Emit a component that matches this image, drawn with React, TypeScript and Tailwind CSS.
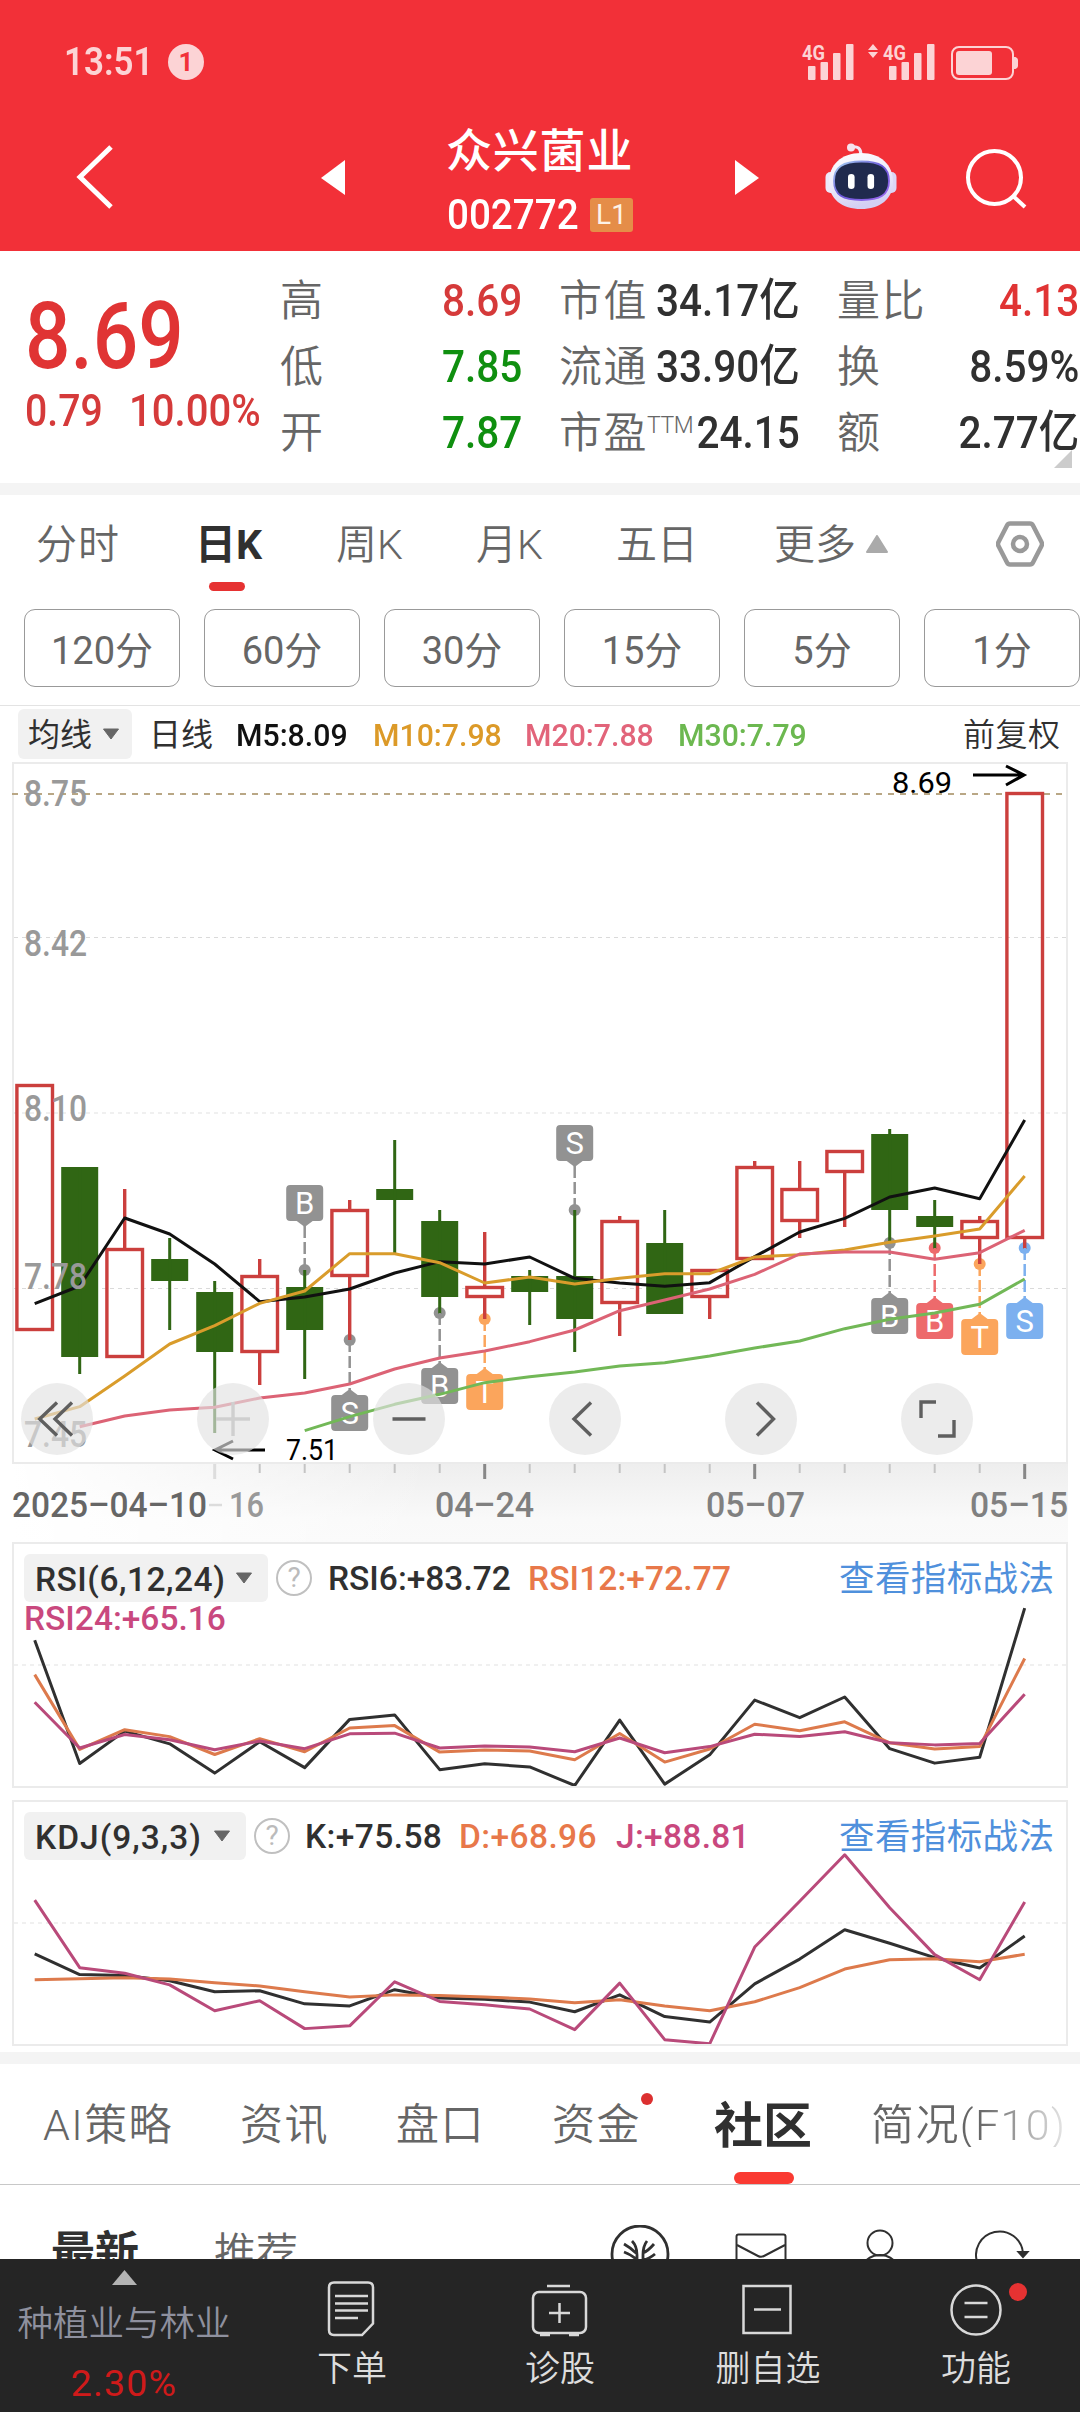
import React from 'react';

type Candle = [top: number, bottom: number, high: number, low: number, up: boolean];

const candles: Candle[] = [
  [1084, 1331, 1084, 1331, true],
  [1167, 1357, 1167, 1374, false],
  [1248, 1358, 1189, 1358, true],
  [1259, 1281, 1238, 1330, false],
  [1292, 1352, 1281, 1433, false],
  [1275, 1353, 1259, 1385, true],
  [1287, 1330, 1270, 1379, false],
  [1209, 1277, 1200, 1340, true],
  [1189, 1200, 1140, 1253, false],
  [1221, 1297, 1210, 1314, false],
  [1286, 1298, 1232, 1319, true],
  [1276, 1292, 1270, 1325, false],
  [1276, 1319, 1210, 1352, false],
  [1220, 1304, 1216, 1336, true],
  [1243, 1314, 1210, 1314, false],
  [1269, 1298, 1269, 1319, true],
  [1166, 1260, 1161, 1260, true],
  [1188, 1222, 1161, 1238, true],
  [1150, 1173, 1150, 1227, true],
  [1134, 1210, 1129, 1243, false],
  [1216, 1227, 1200, 1249, false],
  [1220, 1239, 1216, 1264, true],
  [792, 1239, 792, 1249, true],
];

const ma5 = [731, 678, 474, 522, 612, 725, 711, 687, 639, 605, 612, 591, 655, 669, 679, 668, 590, 516, 475, 411, 384, 416, 180];
const ma10 = [1077, 1040, 948, 852, 797, 730, 693, 581, 581, 608, 669, 651, 672, 655, 641, 641, 591, 584, 570, 547, 528, 507, 348];
const ma20 = [1100, 1068, 1050, 1042, 1014, 999, 972, 927, 894, 873, 845, 810, 752, 720, 687, 643, 582, 576, 576, 598, 578, 511];
const ma30 = [1112, 1070, 1033, 1003, 968, 950, 936, 918, 908, 888, 864, 843, 806, 778, 759, 733, 657];

const rsi6 = [320, 678, 584, 621, 706, 615, 690, 550, 537, 696, 679, 688, 742, 552, 738, 653, 494, 545, 485, 635, 677, 660, 227];
const rsi12 = [420, 637, 580, 600, 652, 606, 644, 575, 568, 645, 639, 642, 667, 591, 674, 636, 564, 583, 557, 618, 636, 629, 373];
const rsi24 = [500, 633, 594, 609, 638, 613, 635, 592, 590, 633, 627, 630, 644, 604, 647, 629, 593, 600, 586, 618, 624, 620, 477];

const kdjK = [1231, 1291, 1294, 1309, 1341, 1338, 1376, 1382, 1335, 1359, 1363, 1371, 1399, 1350, 1413, 1429, 1318, 1246, 1161, 1200, 1242, 1272, 1179];
const kdjD = [1306, 1303, 1300, 1304, 1315, 1324, 1341, 1356, 1350, 1352, 1356, 1362, 1373, 1364, 1382, 1396, 1370, 1329, 1275, 1248, 1245, 1254, 1232];
const kdjJ = [1075, 1271, 1287, 1321, 1396, 1367, 1448, 1440, 1312, 1369, 1379, 1391, 1451, 1316, 1480, 1492, 1211, 1078, 943, 1097, 1233, 1306, 1080];

const GRAY = '#929292';
const markers = [
  { i: 6, label: 'B', color: GRAY, dot: 1270, above: true },
  { i: 12, label: 'S', color: GRAY, dot: 1210, above: true },
  { i: 7, label: 'S', color: GRAY, dot: 1340 },
  { i: 9, label: 'B', color: GRAY, dot: 1313 },
  { i: 10, label: 'T', color: '#fba55c', dot: 1319 },
  { i: 19, label: 'B', color: GRAY, dot: 1243 },
  { i: 20, label: 'B', color: '#ed6a6c', dot: 1248 },
  { i: 21, label: 'T', color: '#fba55c', dot: 1264 },
  { i: 22, label: 'S', color: '#7cb0ef', dot: 1248 },
];

const xAt = (i: number) => 34.7 + 45 * i;

interface LineProps {
  values: number[];
  base: number;
  unit: number;
  color: string;
}

// series are right-aligned to the last candle, `unit` raw steps make one pixel
const Line: React.FC<LineProps> = ({ values, base, unit, color }) => (
  <polyline
    points={values.map((v, k) => `${xAt(23 - values.length + k)},${base + v / unit}`).join(' ')}
    fill="none"
    stroke={color}
    strokeWidth="3"
    strokeLinejoin="round"
  />
);

const Signal: React.FC = () => (
  <svg className="h-9 w-[52px] overflow-visible" viewBox="0 0 52 36" fill="#fcd3d5">
    <text x="0" y="15.5" fontSize="21" fontWeight="700" textLength="23" lengthAdjust="spacingAndGlyphs">4G</text>
    <rect x="6" y="22" width="7.5" height="14" rx="1" />
    <rect x="18.5" y="18" width="7.5" height="18" rx="1" />
    <rect x="31" y="9" width="7.5" height="27" rx="1" />
    <rect x="44" y="0" width="7.5" height="36" rx="1" />
  </svg>
);

const StatusBar: React.FC = () => (
  <div className="flex h-20 items-end pl-[64px] text-[#fcd3d5]">
    <span className="w-[104px] origin-left scale-x-[0.92] text-[38px] leading-9 font-semibold">13:51</span>
    <span className="flex h-9 w-9 items-center justify-center rounded-full bg-[#fcd3d5] text-[26px] leading-none font-bold text-[#f23038]">1</span>
    <div className="ml-[598px] flex items-end">
      <Signal />
      <svg className="ml-[14px] h-9 w-[10px]" viewBox="0 0 10 36" fill="#fcd3d5">
        <path d="M5 0l5 6H0zM5 14l5-6H0z" />
      </svg>
      <span className="w-[5px]" />
      <Signal />
      <svg className="ml-4 h-9 w-[68px]" viewBox="0 0 68 36">
        <rect x="1" y="3" width="61" height="32" rx="7" fill="none" stroke="#fcd3d5" strokeWidth="2" />
        <rect x="5" y="7" width="36" height="24" rx="3" fill="#fcd3d5" />
        <path d="M63 13h1.5q2.5 1 2.5 3v6q0 2-2.5 3H63z" fill="#fcd3d5" />
      </svg>
    </div>
  </div>
);

const Robot: React.FC = () => (
  <svg className="ml-[66px] h-[68px] w-[72px]" viewBox="0 0 72 68">
    <defs>
      <linearGradient id="shell" x1="0" y1="0" x2="0.3" y2="1">
        <stop offset="0" stopColor="#ffffff" />
        <stop offset="0.6" stopColor="#ece9fa" />
        <stop offset="1" stopColor="#d3cff3" />
      </linearGradient>
      <linearGradient id="rim" x1="0" y1="0" x2="1" y2="1">
        <stop offset="0" stopColor="#a9d8f5" />
        <stop offset="0.5" stopColor="#6a56d8" />
        <stop offset="1" stopColor="#a06cf0" />
      </linearGradient>
    </defs>
    <path d="M26 4q10-2 10 8" fill="none" stroke="#f1e6f6" strokeWidth="3" />
    <circle cx="26" cy="4.5" r="4" fill="#f6e3ee" />
    <rect x="0.5" y="29" width="12" height="21" rx="5" fill="#ece9fb" />
    <rect x="59.5" y="29" width="12" height="21" rx="5" fill="#dcd6f5" />
    <path d="M36 10C56 10 68 22 68 39S55 66 36 66 4 56 4 39 16 10 36 10z" fill="url(#shell)" />
    <path d="M36.5 18.5C55 18.5 64 24 64 38S55 57 36.5 57 9 52 9 38 18 18.5 36.5 18.5z" fill="#202a4e" stroke="url(#rim)" strokeWidth="1.8" />
    <rect x="23" y="31" width="6.6" height="15" rx="3.3" fill="#fff" />
    <rect x="42.5" y="31" width="6.6" height="15" rx="3.3" fill="#fff" />
  </svg>
);

const NavBar: React.FC = () => (
  <div className="flex h-[171px] items-center pt-[23px] pl-[76px] text-white">
    <svg className="h-[68px] w-10" viewBox="0 0 40 68" fill="none" stroke="#fff" strokeWidth="5">
      <path d="M35 4L4 34l31 30" />
    </svg>
    <svg className="ml-[205px] h-9 w-6" viewBox="0 0 24 36" fill="#fff">
      <path d="M24 1v35L0 19z" />
    </svg>
    <div className="ml-[101px] flex w-[187px] flex-col">
      <h1 className="text-[46px] leading-[60px] font-medium tracking-[0.8px] whitespace-nowrap">众兴菌业</h1>
      <div className="mt-[16px] flex h-9 items-center">
        <span className="w-[144px] origin-left scale-x-[0.92] pl-px text-[42px] leading-9 font-medium">002772</span>
        <span className="flex h-[34px] w-[43px] items-center justify-center rounded-[3px] bg-[#e58d48] text-[28px] leading-none text-[#fdf3e8]">L1</span>
      </div>
    </div>
    <svg className="ml-[102px] h-9 w-6" viewBox="0 0 24 36" fill="#fff">
      <path d="M0 1v35l24-17z" />
    </svg>
    <Robot />
    <svg className="ml-[67px] h-16 w-16" viewBox="0 0 64 64" fill="none" stroke="#fff" strokeWidth="4">
      <circle cx="30.5" cy="32.5" r="26.5" />
      <path d="M49 51l12 11" />
    </svg>
  </div>
);

interface QuoteRowProps {
  label: React.ReactNode;
  value: string;
  tone?: string;
}

const QuoteRow: React.FC<QuoteRowProps> = ({ label, value, tone = 'text-[#303030]' }) => (
  <div className="flex h-[66px] items-center justify-between whitespace-nowrap">
    <span className="w-0 pt-[2px] text-[43px] leading-none font-[350] tracking-[1.5px] text-[#666]">{label}</span>
    <span className={`origin-right scale-x-[0.9] text-[45px] leading-none font-medium ${tone}`}>{value}</span>
  </div>
);

const Quote: React.FC = () => (
  <section className="flex h-[232px] pt-4">
    <div className="w-[280px] pt-[24px] pl-[25px] text-[#e03434]">
      <div className="origin-left scale-x-[0.87] text-[92px] leading-[92px] font-medium whitespace-nowrap">8.69</div>
      <div className="mt-[5px] flex text-[45px] leading-[45px] font-medium whitespace-nowrap text-[#d53a3a]">
        <span className="w-[104px] origin-left scale-x-[0.87]">0.79</span>
        <span className="origin-left scale-x-[0.89]">10.00%</span>
      </div>
    </div>
    <div className="w-[242px]">
      <QuoteRow label="高" value="8.69" tone="text-[#d53a3a]" />
      <QuoteRow label="低" value="7.85" tone="text-[#0f8f0f]" />
      <QuoteRow label="开" value="7.87" tone="text-[#0f8f0f]" />
    </div>
    <div className="ml-[37px] w-[241px]">
      <QuoteRow label="市值" value="34.17亿" />
      <QuoteRow label="流通" value="33.90亿" />
      <QuoteRow
        label={<>市盈<sup className="-top-[15px] -ml-px text-[23px] tracking-[-0.5px]">TTM</sup></>}
        value="24.15"
      />
    </div>
    <div className="relative ml-[37px] w-[242px]">
      <QuoteRow label="量比" value="4.13" tone="text-[#e03434]" />
      <QuoteRow label="换" value="8.59%" />
      <QuoteRow label="额" value="2.77亿" />
      <svg className="absolute right-[7px] bottom-[15px] h-[18px] w-[18px]" viewBox="0 0 18 18">
        <path d="M18 0v18H0z" fill="#ccc" />
      </svg>
    </div>
  </section>
);

const PeriodTabs: React.FC = () => (
  <nav className="flex h-[98px] items-center pl-[36px] text-[41px] leading-none font-[350] whitespace-nowrap text-[#666]">
    <span className="w-[159px] pt-[2px] tracking-[1px]">分时</span>
    <span className="relative flex h-full w-[141px] items-center pt-[2px] font-bold text-[#303030]">
      日K
      <i className="absolute bottom-[2px] left-[14px] h-[9px] w-9 rounded-full bg-[#e63232]" />
    </span>
    <span className="w-[140px] pt-[2px]">周K</span>
    <span className="w-[140px] pt-[2px]">月K</span>
    <span className="w-[158px] pt-[2px]">五日</span>
    <span className="w-[82px] pt-[2px]">更多</span>
    <svg className="ml-[10px] h-[18px] w-[22px]" viewBox="0 0 22 18">
      <path d="M11 1l10 16H1z" fill="#aaa" stroke="#aaa" strokeWidth="2" strokeLinejoin="round" />
    </svg>
    <svg className="ml-[108px] h-12 w-12" viewBox="0 0 48 48" fill="none" stroke="#999" strokeWidth="4.5" strokeLinejoin="round">
      <path d="M14 3.5h20q2 0 3 2L45.5 22q1 2 0 4L37 42.5q-1 2-3 2H14q-2 0-3-2L2.5 26q-1-2 0-4L11 5.5q1-2 3-2z" />
      <circle cx="24" cy="24" r="7" />
    </svg>
  </nav>
);

const minutes = ['120分', '60分', '30分', '15分', '5分', '1分'];

const MinuteChips: React.FC = () => (
  <div className="flex h-[113px] gap-6 border-b border-[#e3e3e3] pt-4 pl-6">
    {minutes.map((m) => (
      <span key={m} className="flex h-[78px] w-[156px] shrink-0 items-center justify-center rounded-[11px] border border-[#999] pt-[5px] text-[38px] leading-none text-[#666]">
        {m}
      </span>
    ))}
  </div>
);

const Caret: React.FC = () => (
  <svg className="h-3 w-[18px]" viewBox="0 0 18 12">
    <path d="M1.5 1h15L9 11z" fill="#666" stroke="#666" strokeLinejoin="round" />
  </svg>
);

const MaLegend: React.FC = () => (
  <div className="flex h-[56px] items-center pl-[18px] text-[32px] leading-none font-medium whitespace-nowrap">
    <span className="flex h-[50px] w-[114px] items-center gap-[10px] rounded-[6px] bg-[#f1f1f1] pl-[10px] font-normal text-[#303030]">
      <span className="pt-[2px]">均线</span>
      <Caret />
    </span>
    <span className="ml-[17px] w-[87px] pt-[2px] font-normal text-[#303030]">日线</span>
    <span className="w-[137px] origin-left scale-x-[0.945] pt-[2px] text-[#111]">M5:8.09</span>
    <span className="w-[152px] origin-left scale-x-[0.945] pt-[2px] text-[#dc9a28]">M10:7.98</span>
    <span className="w-[153px] origin-left scale-x-[0.945] pt-[2px] text-[#e2647a]">M20:7.88</span>
    <span className="w-[285px] origin-left scale-x-[0.945] pt-[2px] text-[#6cb850]">M30:7.79</span>
    <span className="pt-[2px] tracking-[0.5px] font-[350] text-[#303030]">前复权</span>
  </div>
);

const Marker: React.FC<(typeof markers)[number]> = ({ i, label, color, dot, above }) => {
  const x = xAt(i);
  const top = above ? dot - 85 : dot + 55;
  return (
    <g>
      <line x1={x} x2={x} y1={above ? dot - 44 : dot} y2={above ? dot : dot + 50} stroke={color} strokeWidth="2.5" strokeDasharray="12 4" />
      <rect x={x - 18.5} y={top} width="37" height="36" rx="4" fill={color} />
      <path d={above ? `M${x - 8} ${top + 36}l8 6l8-6z` : `M${x - 8} ${top}l8-6l8 6z`} fill={color} />
      <text x={x} y={top + 29} fill="#fff" fontSize="31" textAnchor="middle">{label}</text>
    </g>
  );
};

const CandleShape: React.FC<{ c: Candle; i: number }> = ({ c: [top, bottom, high, low, up], i }) => {
  const x = xAt(i);
  if (!up) {
    return (
      <g fill="#306614">
        <rect x={x - 18.5} y={top} width="37" height={bottom - top} />
        <rect x={x - 1.5} y={high} width="3" height={low - high} />
      </g>
    );
  }
  return (
    <g fill="none" stroke="#cb3f3d" strokeWidth="3.4">
      <rect x={x - 17.8} y={top + 1.5} width="35.6" height={bottom - top - 3} />
      <path d={`M${x} ${high}V${top}M${x} ${bottom}V${low}`} />
    </g>
  );
};

const buttons = [
  { x: 57, d: 'M0-16.5L-17.3 0L0 16.5M15-16.5L-2 0L15 16.5' },
  { x: 233, d: 'M-17 0H17M0-17V17', faded: true },
  { x: 409, d: 'M-16.5 0H16.5' },
  { x: 585, d: 'M6-16.5L-11 0L6 16.5' },
  { x: 761, d: 'M-4-16.5L12.5 0L-4 16.5' },
  { x: 937, d: 'M-1-17H-16V-1M17 1V17H1' },
];

const KLineChart: React.FC = () => (
  <svg className="block h-[780px] w-[1080px]" viewBox="0 762 1080 780">
    <defs>
      <linearGradient id="axis" x1="0" y1="0" x2="0" y2="1">
        <stop offset="0" stopColor="#eeeeee" />
        <stop offset="0.7" stopColor="#f9f9f9" />
        <stop offset="1" stopColor="#fafafa" />
      </linearGradient>
      <linearGradient id="axisFade" x1="0" y1="0" x2="1" y2="0">
        <stop offset="0" stopColor="#fff" />
        <stop offset="0.3" stopColor="#fff" stopOpacity="0.7" />
        <stop offset="1" stopColor="#fff" stopOpacity="0" />
      </linearGradient>
    </defs>
    <rect x="12" y="1464" width="1056" height="78" fill="url(#axis)" />
    <rect x="12" y="1464" width="420" height="78" fill="url(#axisFade)" />
    <rect x="13" y="763" width="1054" height="700" fill="#fff" stroke="#ebebeb" strokeWidth="2" />
    <line x1="12" x2="1066" y1="794" y2="794" stroke="#b9a785" strokeWidth="1.8" strokeDasharray="6 6" />
    <line x1="14" x2="1066" y1="1113" y2="1113" stroke="#ececec" strokeWidth="1.5" strokeDasharray="4 4" />
    <g stroke="#dadada" strokeDasharray="4 4">
      <line x1="14" x2="1066" y1="937.5" y2="937.5" />
      <line x1="14" x2="1066" y1="1288.5" y2="1288.5" />
    </g>
    <g fill="#999" fontSize="36" fontWeight="500">
      <text x="24" y="806" textLength="63" lengthAdjust="spacingAndGlyphs">8.75</text>
      <text x="24" y="956" textLength="63" lengthAdjust="spacingAndGlyphs">8.42</text>
      <text x="24" y="1447" textLength="63" lengthAdjust="spacingAndGlyphs">7.45</text>
    </g>

    {markers.map((m) => (
      <circle key={m.i} cx={xAt(m.i)} cy={m.dot} r="6" fill={m.color} />
    ))}
    {candles.map((c, i) => (
      <CandleShape key={i} c={c} i={i} />
    ))}
    {markers.map((m) => (
      <Marker key={m.i} {...m} />
    ))}
    <Line values={ma5} base={1060} unit={3} color="#111" />
    <Line values={ma10} base={1060} unit={3} color="#d99c2b" />
    <Line values={ma20} base={1060} unit={3} color="#dc6375" />
    <Line values={ma30} base={1060} unit={3} color="#72b857" />
    <g fill="#999" fontSize="36" fontWeight="500">
      <text x="24" y="1121" textLength="63" lengthAdjust="spacingAndGlyphs">8.10</text>
      <text x="24" y="1289" textLength="63" lengthAdjust="spacingAndGlyphs">7.78</text>
    </g>

    <g fill="none" stroke="#000" strokeWidth="3">
      <path d="M973 775H1024M1006 766L1024 775L1006 785" />
      <path d="M265 1450H215M233 1441L215 1450L233 1459" />
    </g>
    <g fontSize="29">
      <text x="892" y="793" textLength="60" lengthAdjust="spacingAndGlyphs">8.69</text>
      <text x="286" y="1460" textLength="52" lengthAdjust="spacingAndGlyphs">7.51</text>
    </g>

    {buttons.map((b) => (
      <g key={b.x} transform={`translate(${b.x} 1419)`}>
        <circle r="36" fill="#e2e2e2" fillOpacity="0.65" />
        <path d={b.d} fill="none" stroke={b.faded ? '#cfcfcf' : '#5f5f5f'} strokeWidth="3.4" />
      </g>
    ))}

    {candles.slice(4).map((_, k) => {
      const major = k % 6 === 0;
      return (
        <line
          key={k}
          x1={xAt(k + 4)}
          x2={xAt(k + 4)}
          y1="1464"
          y2={major ? 1479 : 1473}
          stroke={k === 0 ? '#ddd' : major ? '#888' : '#c4c4c4'}
          strokeWidth={major ? 3 : 2}
        />
      );
    })}
    <line x1="209" x2="222" y1="1505" y2="1505" stroke="#dcdcdc" strokeWidth="2.5" />
    <g fontSize="35.5" fontWeight="500" fill="#808080">
      <text x="229" y="1517" fill="#999" textLength="35" lengthAdjust="spacingAndGlyphs">16</text>
      <text x="12" y="1517" fill="#666" textLength="195" lengthAdjust="spacingAndGlyphs">2025–04–10</text>
      <text x="435" y="1517" textLength="99" lengthAdjust="spacingAndGlyphs">04–24</text>
      <text x="706" y="1517" textLength="99" lengthAdjust="spacingAndGlyphs">05–07</text>
      <text x="970" y="1517" textLength="98" lengthAdjust="spacingAndGlyphs">05–15</text>
    </g>
  </svg>
);

interface IndicatorProps {
  top: number;
  midline: number;
  children: React.ReactNode;
  lines: React.ReactNode;
}

const IndicatorPanel: React.FC<IndicatorProps> = ({ top, midline, children, lines }) => (
  <section className="relative mx-3 h-[246px] border-2 border-[#ebebeb] pt-[10px] pl-[10px] text-[33.5px] leading-none font-medium">
    <svg className="absolute inset-0 h-[242px] w-[1052px]" viewBox={`14 ${top + 2} 1052 242`}>
      <line x1="14" x2="1066" y1={midline} y2={midline} stroke="#ececec" strokeWidth="1.5" strokeDasharray="4 4" />
      {lines}
    </svg>
    {children}
  </section>
);

const Help: React.FC = () => (
  <span className="ml-2 flex h-9 w-9 shrink-0 items-center justify-center rounded-full border-2 border-[#c0c0c0] text-[28px] leading-none font-normal text-[#bbb]">?</span>
);

const Rsi: React.FC = () => (
  <IndicatorPanel
    top={1542}
    midline={1665}
    lines={
      <>
        <Line values={rsi6} base={1530} unit={2.904} color="#303030" />
        <Line values={rsi12} base={1530} unit={2.904} color="#dd7a4c" />
        <Line values={rsi24} base={1530} unit={2.904} color="#b94a7a" />
      </>
    }
  >
    <div className="relative flex items-center whitespace-nowrap">
      <span className="flex h-12 w-[244px] items-center rounded-[6px] bg-[#f1f1f1] pl-[11px] text-[#303030]">
        <span className="w-[200px] pt-[3px] tracking-[0.5px]">RSI(6,12,24)</span>
        <Caret />
      </span>
      <Help />
      <span className="ml-[16px] w-[200px] pt-[2px] text-[#303030]">RSI6:+83.72</span>
      <span className="w-[311px] pt-[2px] tracking-[0.1px] text-[#e8784a]">RSI12:+72.77</span>
      <span className="pt-[4px] text-[35.5px] font-normal tracking-[0.4px] text-[#4f90dc]">查看指标战法</span>
    </div>
    <div className="relative text-[#c9487e]">RSI24:+65.16</div>
  </IndicatorPanel>
);

const Kdj: React.FC = () => (
  <IndicatorPanel
    top={1800}
    midline={1923}
    lines={
      <>
        <Line values={kdjK} base={1530} unit={2.904} color="#303030" />
        <Line values={kdjD} base={1530} unit={2.904} color="#dd7a4c" />
        <Line values={kdjJ} base={1530} unit={2.904} color="#b94a7a" />
      </>
    }
  >
    <div className="relative flex items-center whitespace-nowrap">
      <span className="flex h-12 w-[222px] items-center rounded-[6px] bg-[#f1f1f1] pl-[11px] text-[#303030]">
        <span className="w-[178px] pt-[3px] tracking-[1px]">KDJ(9,3,3)</span>
        <Caret />
      </span>
      <Help />
      <span className="ml-[15px] w-[154px] pt-[2px] tracking-[0.4px] text-[#303030]">K:+75.58</span>
      <span className="w-[157px] pt-[2px] tracking-[0.4px] text-[#e8784a]">D:+68.96</span>
      <span className="w-[223px] pt-[2px] tracking-[0.3px] text-[#c9487e]">J:+88.81</span>
      <span className="pt-[4px] text-[35.5px] font-normal tracking-[0.4px] text-[#4f90dc]">查看指标战法</span>
    </div>
  </IndicatorPanel>
);

const InfoTabs: React.FC = () => (
  <nav className="flex h-[121px] items-center border-b border-[#c8c8c8] pt-[3px] pl-[43px] text-[43px] leading-none font-[350] tracking-[1.4px] whitespace-nowrap text-[#666]">
    <span className="w-[197px]">AI策略</span>
    <span className="w-[156px]">资讯</span>
    <span className="w-[156px]">盘口</span>
    <span className="relative w-[162px]">
      资金
      <i className="absolute -top-[11px] left-[89px] h-3 w-3 rounded-full bg-[#dc3030]" />
    </span>
    <span className="relative flex h-full w-[157px] items-center pt-[2px] text-[49px] font-bold tracking-normal text-[#303030]">
      社区
      <i className="absolute bottom-0 left-[20px] h-3 w-[60px] rounded-full bg-[#fa3a32]" />
    </span>
    <span className="bg-linear-to-r from-[#666] from-55% to-[#e8e8e8] bg-clip-text text-transparent">简况(F10)</span>
  </nav>
);

const FeedHeader: React.FC = () => (
  <div className="flex h-[74px] items-start overflow-hidden pl-[51px] whitespace-nowrap">
    <span className="mt-[46px] w-[163px] text-[44px] leading-none font-bold text-[#303030]">最新</span>
    <span className="mt-[48px] w-[396px] text-[42px] leading-none font-[350] text-[#666]">推荐</span>
    <svg className="mt-[40px] h-[60px] w-[60px] shrink-0" viewBox="0 0 60 60" fill="none" stroke="#303030" strokeWidth="2.8">
      <circle cx="30" cy="29" r="28" />
      <path d="M27 50V30q0-9-5-14M26 28q-5-5-12-9M27 35q-5-5-13-8M33 50V30q0-9 4-14M33 28q5-2 11-9M33 35q6-1 12-6" />
    </svg>
    <svg className="mt-[48px] ml-[65px] h-10 w-[52px] shrink-0" viewBox="0 0 52 40" fill="none" stroke="#303030" strokeWidth="2">
      <rect x="1.5" y="1.5" width="49" height="37" rx="2" />
      <path d="M2 12l21 11q3 1.5 6 0l21-11" />
    </svg>
    <svg className="mt-[44px] ml-[72px] h-12 w-12 shrink-0" viewBox="0 0 48 48" fill="none" stroke="#303030" strokeWidth="2">
      <circle cx="21" cy="14" r="12.5" />
      <path d="M2 38q7-12 19-12t19 12" />
    </svg>
    <svg className="mt-[44px] ml-[68px] h-12 w-14 shrink-0" viewBox="0 0 56 48" fill="none" stroke="#303030" strokeWidth="2">
      <path d="M2.500 34A23.5 23.5 0 1 1 48 24" />
      <path d="M43.5 23h9l-4.5 5z" fill="#303030" />
    </svg>
  </div>
);

const tools = [
  {
    label: '下单',
    icon: (
      <>
        <path d="M12 3.5h34q5 0 5 5v36L40 56H12q-5 0-5-5V8.5q0-5 5-5z" />
        <path d="M13 17H46M13 24.5H46M13 31.5H46M13 39H36" />
      </>
    ),
  },
  {
    label: '诊股',
    icon: (
      <>
        <rect x="3" y="13" width="53" height="41" rx="6" />
        <path d="M17 7h23M29.5 24v20M19 34h21M10 56h10M39 56h10" />
      </>
    ),
  },
  {
    label: '删自选',
    icon: (
      <>
        <rect x="5.5" y="7" width="47" height="47" />
        <path d="M16 30.5h27" />
      </>
    ),
  },
  {
    label: '功能',
    icon: (
      <>
        <circle cx="30" cy="31" r="24.5" />
        <path d="M18.5 24h23M18.5 38h23" />
      </>
    ),
  },
];

const BottomBar: React.FC = () => (
  <footer className="flex h-[153px] bg-[#252525]">
    <div className="flex w-[248px] flex-col items-center whitespace-nowrap">
      <svg className="mt-[11px] h-[15px] w-[25px]" viewBox="0 0 25 15">
        <path d="M12.5 0L25 15H0z" fill="#b3b3b3" />
      </svg>
      <span className="mt-[21px] text-[35.5px] leading-[36px] font-[350] text-[#8e909e]">种植业与林业</span>
      <span className="mt-[23px] text-[37.5px] leading-[36px] tracking-[1.2px] text-[#cf1a1a]">2.30%</span>
    </div>
    {tools.map((t) => (
      <div key={t.label} className="relative flex w-[208px] flex-col items-center text-[#ddd]">
        <svg className="mt-5 h-[60px] w-[60px]" viewBox="0 0 60 60" fill="none" stroke="#d8d8d8" strokeWidth="2.5">
          {t.icon}
        </svg>
        <span className="mt-[13px] text-[35px] leading-[36px] font-[350]">{t.label}</span>
        {t.label === '功能' && <i className="absolute top-6 left-[137px] h-[18px] w-[18px] rounded-full bg-[#e63232]" />}
      </div>
    ))}
  </footer>
);

export default function App() {
  return (
    <main className="h-[2412px] w-[1080px] overflow-hidden bg-white font-[Roboto,'Noto_Sans_CJK_SC',sans-serif]">
      <header className="h-[251px] bg-[#f23038]">
        <StatusBar />
        <NavBar />
      </header>
      <Quote />
      <div className="h-3 bg-[#f4f4f4]" />
      <PeriodTabs />
      <MinuteChips />
      <MaLegend />
      <KLineChart />
      <Rsi />
      <div className="h-3" />
      <Kdj />
      <div className="h-[6px]" />
      <div className="h-3 bg-[#f4f4f4]" />
      <InfoTabs />
      <FeedHeader />
      <BottomBar />
    </main>
  );
}
